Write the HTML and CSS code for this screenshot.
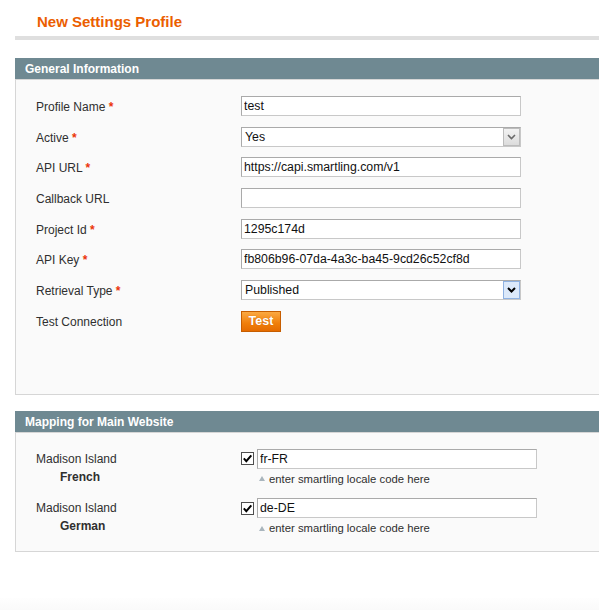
FILE: index.html
```html
<!DOCTYPE html>
<html>
<head>
<meta charset="utf-8">
<title>New Settings Profile</title>
<link rel="stylesheet" href="styles.css">
</head>
<body>
<div class="page">
  <div class="content-header">
    <h3 class="page-title">New Settings Profile</h3>
  </div>

  <div class="section">
    <div class="section-head">General Information</div>
    <div class="fieldset fieldset-general">
      <div class="form-grid">
        <div class="lbl">Profile Name <span class="req">*</span></div>
        <div class="val"><input class="txt" type="text" value="test" readonly></div>

        <div class="lbl">Active <span class="req">*</span></div>
        <div class="val">
          <div class="sel">
            <span class="sel-text">Yes</span>
            <span class="sel-btn">
              <svg width="9" height="6" viewBox="0 0 9 6"><path d="M1 1 L4.5 4.5 L8 1" fill="none" stroke="#6a6a6a" stroke-width="1.6"/></svg>
            </span>
          </div>
        </div>

        <div class="lbl">API URL <span class="req">*</span></div>
        <div class="val"><input class="txt" type="text" value="https://capi.smartling.com/v1" readonly></div>

        <div class="lbl">Callback URL</div>
        <div class="val"><input class="txt" type="text" value="" readonly></div>

        <div class="lbl">Project Id <span class="req">*</span></div>
        <div class="val"><input class="txt" type="text" value="1295c174d" readonly></div>

        <div class="lbl">API Key <span class="req">*</span></div>
        <div class="val"><input class="txt" type="text" value="fb806b96-07da-4a3c-ba45-9cd26c52cf8d" readonly></div>

        <div class="lbl">Retrieval Type <span class="req">*</span></div>
        <div class="val">
          <div class="sel">
            <span class="sel-text">Published</span>
            <span class="sel-btn sel-btn-hover">
              <svg width="9" height="6" viewBox="0 0 9 6"><path d="M1 1 L4.5 4.5 L8 1" fill="none" stroke="#000" stroke-width="2"/></svg>
            </span>
          </div>
        </div>

        <div class="lbl">Test Connection</div>
        <div class="val"><button class="btn" type="button">Test</button></div>
      </div>
    </div>
  </div>

  <div class="section">
    <div class="section-head">Mapping for Main Website</div>
    <div class="fieldset fieldset-map">
      <div class="map-grid">
        <div class="map-lbl">
          <div>Madison Island</div>
          <div class="store">French</div>
        </div>
        <div class="map-val">
          <div class="map-line">
            <span class="chk"><svg width="11" height="11" viewBox="0 0 11 11"><path d="M1.8 5.4 L4.3 8.2 L9.3 2.3" fill="none" stroke="#000" stroke-width="2"/></svg></span>
            <input class="txt" type="text" value="fr-FR" readonly>
          </div>
          <div class="note"><span class="tri"></span>enter smartling locale code here</div>
        </div>

        <div class="map-lbl">
          <div>Madison Island</div>
          <div class="store">German</div>
        </div>
        <div class="map-val">
          <div class="map-line">
            <span class="chk"><svg width="11" height="11" viewBox="0 0 11 11"><path d="M1.8 5.4 L4.3 8.2 L9.3 2.3" fill="none" stroke="#000" stroke-width="2"/></svg></span>
            <input class="txt" type="text" value="de-DE" readonly>
          </div>
          <div class="note"><span class="tri"></span>enter smartling locale code here</div>
        </div>
      </div>
    </div>
  </div>
</div>
<div class="footer"></div>
</body>
</html>
```

FILE: styles.css
```css
html {
  overflow: hidden;
}
body {
  margin: 0;
  background: #fff;
  font-family: "Liberation Sans", Arial, sans-serif;
  font-size: 12px;
  color: #2f2f2f;
}
.page {
  padding-left: 15px;
}
.content-header {
  border-bottom: 4px solid #dfdfdf;
  padding: 13px 0 5px 22px;
  margin-bottom: 18px;
}
.page-title {
  margin: 0;
  font-size: 15px;
  line-height: 18px;
  font-weight: bold;
  color: #eb5e00;
}
.section {
  margin-bottom: 16px;
}
.section-head {
  height: 21px;
  line-height: 23px;
  background: #6f8992;
  color: #fff;
  font-weight: bold;
  font-size: 12px;
  padding-left: 10px;
}
.fieldset {
  background: #fafafa;
  border: 1px solid #d6d6d6;
  border-right: 0;
  padding: 16px 0 0 20px;
}
.fieldset-general {
  padding-bottom: 62px;
}
.fieldset-map {
  padding-bottom: 16px;
}
.form-grid {
  display: grid;
  grid-template-columns: 205px 1fr;
  row-gap: 10.7px;
  align-items: center;
}
.lbl {
  line-height: 14px;
  padding-top: 2px;
}
.req {
  color: #eb340a;
  font-weight: bold;
}
.val {
  display: flex;
  align-items: center;
}
.txt {
  box-sizing: border-box;
  width: 280px;
  height: 20px;
  margin: 0;
  padding: 0 2px;
  border: 1px solid;
  border-color: #aaa #c8c8c8 #c8c8c8 #aaa;
  background: #fff;
  font-family: "Liberation Sans", Arial, sans-serif;
  font-size: 12.3px;
  color: #111;
  outline: none;
}
.sel {
  box-sizing: border-box;
  width: 280px;
  height: 20px;
  border: 1px solid;
  border-color: #aaa #c8c8c8 #c8c8c8 #aaa;
  background: #fff;
  display: flex;
  align-items: center;
  justify-content: space-between;
}
.sel-text {
  padding-left: 3px;
  font-size: 12.3px;
  color: #111;
}
.sel-btn {
  box-sizing: border-box;
  width: 17px;
  height: 18px;
  display: flex;
  align-items: center;
  justify-content: center;
  background: linear-gradient(#f2f2f2, #dcdcdc);
  border: 1px solid #bcbcbc;
}
.sel-btn-hover {
  background: #dce9fa;
  border-color: #8fb2e2;
}
.btn {
  box-sizing: border-box;
  height: 21px;
  width: 40px;
  margin: 0;
  padding: 0;
  border: 1px solid #c65d00;
  background: linear-gradient(#fba942, #f07e0a 60%, #e56b00);
  color: #fff;
  font-family: "Liberation Sans", Arial, sans-serif;
  font-size: 12.5px;
  font-weight: bold;
  text-shadow: 0 0 1px #c45a00;
}
.map-grid {
  display: grid;
  grid-template-columns: 205px 1fr;
  row-gap: 12.5px;
}
.map-lbl {
  padding-top: 1px;
  line-height: 18px;
}
.store {
  padding-left: 24px;
  font-weight: bold;
}
.map-line {
  display: flex;
  align-items: center;
}
.chk {
  box-sizing: border-box;
  width: 13px;
  height: 13px;
  border: 1px solid #4e4e4e;
  background: #fff;
  margin-right: 3px;
  display: flex;
  align-items: center;
  justify-content: center;
}
.note {
  margin-top: 3px;
  padding-left: 18px;
  font-size: 11.3px;
  line-height: 14px;
  color: #2f2f2f;
  display: flex;
  align-items: center;
}
.tri {
  width: 0;
  height: 0;
  border-left: 3px solid transparent;
  border-right: 3px solid transparent;
  border-bottom: 5px solid #a9b5bd;
  margin-right: 4px;
}
.footer {
  margin-top: 46px;
  height: 20px;
  background: linear-gradient(#fefefe, #f7f7f7);
}
```
